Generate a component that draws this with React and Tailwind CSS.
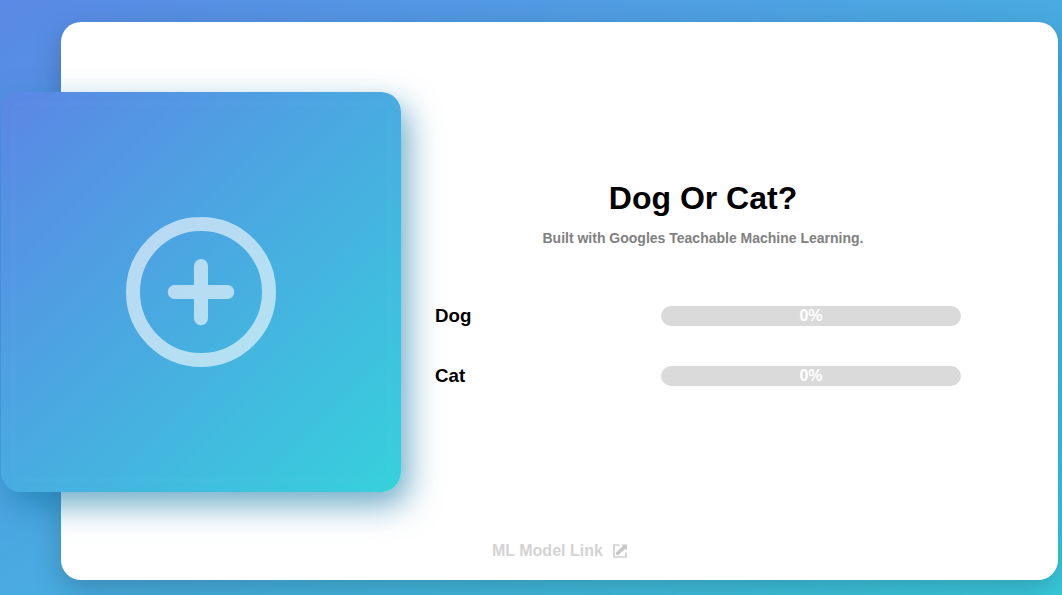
function AddIcon() {
  return (
    <svg className="size-[150px]" viewBox="0 0 150 150" fill="none" stroke="white" strokeWidth="14" strokeLinecap="round" opacity="0.6">
      <path d="M75 7a68 68 0 1 0 0 136a68 68 0 1 0 0 -136M75 49v52.3M48.7 75h52.6" />
    </svg>
  );
}

function LinkIcon() {
  return (
    <svg className="size-[14px]" viewBox="0 0 14 14" fill="none">
      <path d="M6.5 1H1v12h12V8.6" stroke="#d0d0d0" strokeWidth="1.7" />
      <path d="M8 0.6H14V6L12.2 4.9 5.4 10.9H3V8.4L9.8 2.3Z" fill="#c8c8c8" />
    </svg>
  );
}

function Prediction({ label, value }) {
  return (
    <div className="flex h-5 items-center justify-between">
      <span className="text-[18.72px] leading-5 font-bold text-black">{label}</span>
      <div className="relative h-5 w-[300px] overflow-hidden rounded-[10px] bg-[#dadada]">
        <div className="h-full bg-[#36d1dc]" style={{ width: `${value}%` }} />
        <span className="absolute inset-0 text-center text-base leading-5 font-bold text-white">{value}%</span>
      </div>
    </div>
  );
}

export default function App() {
  return (
    <div className="h-screen w-screen overflow-hidden bg-[linear-gradient(to_bottom_right,#5b86e5_-5%,#36d1dc_109%)] pt-[22px] pl-[61px] font-['Liberation_Sans',Arial,sans-serif]">
      <main className="flex h-[558px] w-[997px] rounded-[20px] bg-white shadow-[0_10px_30px_rgba(0,0,0,0.2)]">
        <button className="mt-[70px] -ml-[60px] flex size-[400px] shrink-0 items-center justify-center rounded-[20px] bg-[linear-gradient(135deg,#5b86e5,#36d1dc)] shadow-[7px_13px_32px_rgba(20,120,165,0.62)] outline-4 -outline-offset-[14px] outline-white/[0.015]" aria-label="Add image">
          <AddIcon />
        </button>
        <section className="flex grow flex-col pt-[158px] pr-[97px] pl-[34px]">
          <header className="ml-[5px] w-[526px] text-center">
            <h1 className="text-[32px] leading-[37px] font-bold text-black">Dog Or Cat?</h1>
            <p className="mt-[14px] text-sm leading-[15px] font-bold text-[#808080]">Built with Googles Teachable Machine Learning.</p>
          </header>
          <div className="mt-[60px] mr-[5px] flex flex-col gap-10">
            <Prediction label="Dog" value={0} />
            <Prediction label="Cat" value={0} />
          </div>
          <a className="mt-auto mb-5 ml-[57px] flex items-center gap-2.5 text-base leading-[18px] font-bold text-[#d3d3d3]">
            ML Model Link
            <LinkIcon />
          </a>
        </section>
      </main>
    </div>
  );
}
